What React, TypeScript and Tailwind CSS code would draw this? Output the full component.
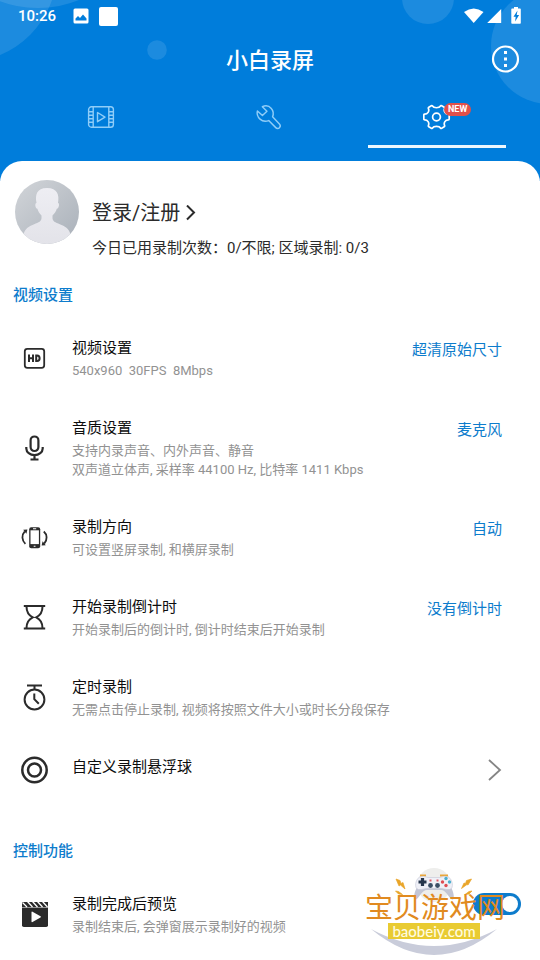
import { useState } from 'react';
import type { ReactNode } from 'react';

interface SettingItem {
  id: string;
  icon: ReactNode;
  title: string;
  lines: string[];
  value?: string;
  arrow?: boolean;
}

const HdIcon = () => (
  <svg width="28" height="28" viewBox="0 0 28 28" fill="none" stroke="#2b2b2b" aria-hidden="true">
    <rect x="4.8" y="3.8" width="19.4" height="19" rx="2.5" strokeWidth="1.8" />
    <path d="M9 9.5v7.6M13 9.5v7.6M9 13.3h4M16.2 10.5v5.6h.9c1.7 0 2.5-1 2.5-2.8s-.8-2.8-2.5-2.8z" strokeWidth="2" />
  </svg>
);

const MicIcon = () => (
  <svg width="28" height="28" viewBox="0 0 28 28" fill="none" stroke="#2b2b2b" strokeWidth="2.2" aria-hidden="true">
    <rect x="10.6" y="2.5" width="7.8" height="14.5" rx="3.9" />
    <path d="M6.3 13v1.5a8.2 6.6 0 0 0 16.4 0V13M14.5 21v4.500M10.5 25.500h8" />
  </svg>
);

const RotateIcon = () => (
  <svg width="28" height="28" viewBox="0 0 28 28" fill="none" stroke="#2b2b2b" aria-hidden="true">
    <rect x="9.2" y="3.2" width="11" height="21" rx="2" fill="#2b2b2b" stroke="none" />
    <rect x="10.5" y="6.3" width="8.4" height="13.8" fill="#fff" stroke="none" />
    <path d="M13 4.8h3.2M13.7 22.2h1.8" stroke="#fff" strokeWidth="1.1" />
    <path d="M5.4 19.8C1.8 16.5 1.3 11 4.8 7.3M23.8 7.5c3.5 3 3.8 8.5.4 12.2" strokeWidth="1.8" />
    <path d="M3.2 5.8l4.2-.3-1 4.3zM25.8 21.2l-4.2.2 1-4.2z" fill="#2b2b2b" stroke="none" />
  </svg>
);

const HourglassIcon = () => (
  <svg width="28" height="28" viewBox="0 0 28 28" fill="none" stroke="#2b2b2b" strokeWidth="2" aria-hidden="true">
    <path d="M3.8 2h21.4M3.8 24.5h21.4" />
    <path d="M6.5 2.5c0 5 1.5 8.500 6.3 10.8C8 15.600 6.5 19 6.5 24M22.5 2.5c0 5-1.5 8.500-6.3 10.8 4.8 2.300 6.3 5.700 6.3 10.700" />
  </svg>
);

const TimerIcon = () => (
  <svg width="28" height="28" viewBox="0 0 28 28" fill="none" stroke="#2b2b2b" strokeWidth="2" aria-hidden="true">
    <circle cx="14.5" cy="15.5" r="9.9" />
    <path d="M7 1.500h15M14.500 1.500v4.500M14.300 9.500v5.600l4.500 4.600" />
  </svg>
);

const BallIcon = () => (
  <svg width="28" height="28" viewBox="0 0 28 28" fill="none" stroke="#2b2b2b" strokeWidth="2.5" aria-hidden="true">
    <circle cx="14.5" cy="14" r="12.2" />
    <circle cx="14.5" cy="14" r="6.5" />
  </svg>
);

const ClapperIcon = () => (
  <svg width="28" height="28" viewBox="0 0 28 28" aria-hidden="true">
    <path d="M2 1h26v5.500H2z" fill="#2b2b2b" />
    <path d="M2.500 1.500l4.500 4.500M7.500 .5l5 5.500M12.500 .5l5 5.500M17.500 .5l5 5.500M22.500 .5l5 5.500" stroke="#fff" strokeWidth="1.3" />
    <path d="M2 7h26V24.200a1.800 1.800 0 0 1-1.800 1.800H3.800A1.800 1.800 0 0 1 2 24.200z" fill="#2b2b2b" />
    <path d="M11.500 11.300v9.200a.7.7 0 0 0 1 .6l8-4.600a.7.7 0 0 0 0-1.200l-8-4.600a.7.7 0 0 0-1 .6z" fill="#fff" />
  </svg>
);

const videoSettings: SettingItem[] = [
  { id: 'video', icon: <HdIcon />, title: '视频设置', lines: ['540x960\u00a0 30FPS\u00a0 8Mbps'], value: '超清原始尺寸' },
  {
    id: 'audio',
    icon: <MicIcon />,
    title: '音质设置',
    lines: ['支持内录声音、内外声音、静音', '双声道立体声, 采样率 44100 Hz, 比特率 1411 Kbps'],
    value: '麦克风',
  },
  { id: 'direction', icon: <RotateIcon />, title: '录制方向', lines: ['可设置竖屏录制, 和横屏录制'], value: '自动' },
  {
    id: 'countdown',
    icon: <HourglassIcon />,
    title: '开始录制倒计时',
    lines: ['开始录制后的倒计时, 倒计时结束后开始录制'],
    value: '没有倒计时',
  },
  {
    id: 'timer',
    icon: <TimerIcon />,
    title: '定时录制',
    lines: ['无需点击停止录制, 视频将按照文件大小或时长分段保存'],
  },
  { id: 'ball', icon: <BallIcon />, title: '自定义录制悬浮球', lines: [], arrow: true },
];

function StatusBar() {
  return (
    <div className="flex h-8 items-center px-[18px]">
      <span className="text-[15px] font-medium leading-5">10:26</span>
      <svg className="ml-[17px]" width="16" height="16" viewBox="0 0 16 16" aria-hidden="true">
        <rect x="0.5" y="0.5" width="15" height="15" rx="1.5" fill="#fff" />
        <path d="M2.500 12.500v-2l2.500-2.500 2 2 3-3.500 3.500 4v2z" fill="#007ddb" />
      </svg>
      <span className="ml-[10px] size-[19px] rounded-[2px] bg-white" />
      <svg className="ml-auto" width="58" height="20" viewBox="0 0 58 20" fill="#fff" aria-hidden="true">
        <path d="M0 6Q9.700-1 19.500 6L9.700 17z" />
        <path d="M37.200 3v14h-14z" />
        <path d="M50 1h4v1.500h2a.8.8 0 0 1 .8.8V17a.8.8 0 0 1-.8.8h-7.900a.8.8 0 0 1-.8-.8V3.300a.8.8 0 0 1 .8-.8H50z" />
        <path d="M53.500 4.500l-4 6.200h2.200l-.6 4.800 4-6.500h-2.400z" fill="#007ddb" />
      </svg>
    </div>
  );
}

function Header({ tab, onTab }: { tab: number; onTab: (tab: number) => void }) {
  const tabs = [
    {
      label: '视频',
      icon: (
        <svg width="28" height="28" viewBox="0 0 28 28" fill="none" stroke="currentColor" strokeWidth="1.4" aria-hidden="true">
          <rect x="1.6" y="3.8" width="24.8" height="20.4" rx="2.8" />
          <path d="M6.200 4v20M21.800 4v20M2 8.800h4M2 12.200h4M2 15.800h4M2 19.200h4M22 8.800h4M22 12.200h4M22 15.800h4M22 19.200h4" />
          <path d="M10.500 9.500v9.200l7.500-4.600z" strokeLinejoin="round" />
        </svg>
      ),
    },
    {
      label: '工具',
      icon: (
        <svg width="28" height="28" viewBox="0 -1 29 29" fill="none" stroke="currentColor" strokeWidth="1.5" strokeLinejoin="round" aria-hidden="true">
          <path d="M2.500 7.300l5.200 4.700 4.700-4.500-4.800-4.700c3.300-1.500 7-.8 9.300 1.800 2.200 2.500 2.400 5.800 1.300 8.700l7.100 7.500c1.100 1.200 1 2.800 0 3.800s-2.700 1-3.800-.1l-7.300-7.300c-3 1.200-6.500.8-9-1.500-2.500-2.400-3.500-5.500-2.700-8.400z" />
        </svg>
      ),
    },
    {
      label: '设置',
      icon: (
        <svg width="28" height="28" viewBox="0 0 28 28" fill="none" stroke="currentColor" strokeWidth="1.7" strokeLinejoin="round" aria-hidden="true">
          <path d="M9.500 3c1.300 2.300 6.700 2.300 8 0 .3-.5.700-.6 1.200-.3l2.500 1.500c.5.3.6.7.4 1.200-1.200 2.800.800 5.800 3.700 5.800.6 0 .9.300.9.800v4c0 .5-.3.800-.9.800-2.900 0-4.900 3-3.700 5.800.2.500.1.900-.4 1.200l-2.500 1.500c-.5.3-.9.200-1.200-.3-1.300-2.300-6.700-2.300-8 0-.3.500-.7.600-1.200.3l-2.500-1.500c-.5-.3-.6-.7-.4-1.200 1.200-2.800-.8-5.800-3.700-5.800-.6 0-.9-.3-.9-.800v-4c0-.5.3-.8.9-.8 2.900 0 4.900-3 3.700-5.800-.2-.5-.1-.9.4-1.200l2.500-1.500c.5-.3.9-.2 1.200.3z" />
          <circle cx="13.5" cy="14" r="3.9" />
        </svg>
      ),
    },
  ];

  return (
    <header className="relative h-[181px] overflow-hidden bg-[#007ddb] text-white">
      {/* background bubbles */}
      <svg className="absolute left-0 top-0" width="200" height="70" viewBox="0 0 200 70" fill="#fff" fillOpacity="0.11" aria-hidden="true">
        <circle cx="-35" cy="-30" r="92" />
        <circle cx="38" cy="-101" r="109" />
        <circle cx="157" cy="50" r="9.8" />
      </svg>
      <svg className="absolute right-0 top-0" width="140" height="106" viewBox="0 0 140 106" fill="#fff" fillOpacity="0.11" aria-hidden="true">
        <circle cx="28" cy="-2" r="26" />
        <circle cx="149" cy="46" r="58" />
      </svg>

      <div className="relative">
        <StatusBar />
        <div className="grid h-[54px] grid-cols-[1fr_auto_1fr] items-center px-5">
          <h1 className="col-start-2 pt-[3px] text-[22px] font-medium leading-8">小白录屏</h1>
          <button type="button" aria-label="更多" className="justify-self-end">
            <svg width="29" height="29" viewBox="0 0 29 29" fill="#fff" aria-hidden="true">
              <circle cx="14.5" cy="14" r="12.5" fill="none" stroke="#fff" strokeWidth="2.2" />
              <path d="M13 6h3v3h-3zM13 12.500h3v3h-3zM13 19h3v3h-3z" />
            </svg>
          </button>
        </div>
        <nav className="grid grid-cols-3 pl-[17px] pr-[19px]">
          {tabs.map((item, index) => (
            <button
              key={item.label}
              type="button"
              aria-label={item.label}
              onClick={() => onTab(index)}
              className={`flex h-[62px] flex-col items-center pt-[17px] ${index === tab ? 'text-white' : 'text-[#8fcdf8]'}`}
            >
              <span className="relative">
                {item.icon}
                {index === 2 && (
                  <span className="absolute left-[21px] top-0 rounded-full bg-[#e2504a] px-1 text-[9px] font-bold leading-[13px] text-white">
                    NEW
                  </span>
                )}
              </span>
              <span className={`mt-auto h-[3px] w-[138px] ${index === tab ? 'bg-[#eef7fe]' : ''}`} />
            </button>
          ))}
        </nav>
      </div>
    </header>
  );
}

function Profile() {
  return (
    <div className="flex items-start gap-[13px] px-[15px] pt-[19px]">
      <svg className="shrink-0" width="64" height="64" viewBox="0 0 64 64" aria-hidden="true">
        <defs>
          <linearGradient id="avatarBg" x1="0" y1="0" x2="1" y2="1">
            <stop offset="0" stopColor="#d2d5d9" />
            <stop offset="1" stopColor="#a9b0b9" />
          </linearGradient>
          <linearGradient id="avatarBody" x1="0" y1="0" x2="0" y2="1">
            <stop offset="0" stopColor="#eeeef3" />
            <stop offset="1" stopColor="#e3e3e9" />
          </linearGradient>
          <clipPath id="avatarClip">
            <circle cx="32" cy="32" r="32" />
          </clipPath>
        </defs>
        <g clipPath="url(#avatarClip)">
          <path d="M0 0h64v64H0z" fill="url(#avatarBg)" />
          <path
            d="M21.500 23c-1.500-8 0-15 10.500-15s12.500 7 11 15c1.700-.2 1.200 5.500-1.200 5.800-.8 3-2.400 5-4.300 6.600v3c.5 3.800 4.500 4.300 9 6.500 5 2.300 8.500 4.500 9.500 12V64H8V56.900c1-7.500 4.500-9.700 9.500-12 4.500-2.200 8.500-2.700 9-6.500v-3c-1.900-1.600-3.300-3.600-4.100-6.600-2.400-.3-2.700-6-.9-5.800z"
            fill="url(#avatarBody)"
          />
        </g>
      </svg>
      <div className="pt-[21px] text-[#2b2b2b]">
        <a href="#login" className="flex h-6 items-center gap-[6px] text-xl leading-6">
          登录/注册
          <svg width="10" height="16" viewBox="0 0 10 16" fill="none" stroke="#2b2b2b" strokeWidth="2" aria-hidden="true">
            <path d="M1 .5l7 7-7 7" />
          </svg>
        </a>
        <p className="mt-3 text-[15px] leading-[22px]">今日已用录制次数：0/不限; 区域录制: 0/3</p>
      </div>
    </div>
  );
}

function RowText({ title, lines }: { title: string; lines: string[] }) {
  return (
    <span className="block flex-1 text-left">
      <span className="block text-[15px] leading-[22px] text-[#0d0d0d]">{title}</span>
      {lines.length > 0 && (
        <span className="mt-[2px] block text-[13px] leading-[19px] text-[#929292]">
          {lines.map((line) => (
            <span key={line} className="block">
              {line}
            </span>
          ))}
        </span>
      )}
    </span>
  );
}

function Row({ item }: { item: SettingItem }) {
  return (
    <button type="button" className="flex w-full items-start pb-[18px] pl-5 pr-[38px] pt-[19px]">
      <span className="mr-6 shrink-0 self-center">{item.icon}</span>
      <RowText title={item.title} lines={item.lines} />
      {item.value && <span className="pt-[2px] text-[15px] leading-[22px] text-[#0d7ccc]">{item.value}</span>}
      {item.arrow && (
        <svg className="shrink-0 self-center" width="14" height="22" viewBox="0 0 14 22" fill="none" stroke="#858585" strokeWidth="1.8" aria-hidden="true">
          <path d="M1 1l11 10L1 21" />
        </svg>
      )}
    </button>
  );
}

// Site mark floating over the bottom right corner
function SiteMark() {
  return (
    <div className="pointer-events-none absolute bottom-0 right-[34px] flex w-[142px] flex-col items-center">
      <svg className="absolute left-0 top-0" width="142" height="92" viewBox="0 0 142 92" aria-hidden="true">
        <circle cx="70" cy="17" r="17" fill="#eeeeec" />
        <path d="M56 7.500h6M76 7.500h8" stroke="#e9a63a" strokeWidth="2" />
        <path d="M54 17c-3 6-4.500 10-3.500 14 2 2 4-2 6-4.500s4-4.500 6.500-4.500h14c2.500 0 4.500 2 6.500 4.500s4 6.500 6 4.500c1-4-.5-8-3.500-14z" fill="#c3c6d5" />
        <path
          d="M58 8.500c2-.5 4 .5 6 1h12c2-.5 4-1.500 6-1 4 .5 5.500 3 6.300 7 .4 3-.3 5.500-2.800 6-4 .5-5.500-1-8.500-1h-14c-3 0-4.500 1.500-8.500 1-2.500-.5-3.200-3-2.800-6 .8-4 2.300-6.500 6.300-7z"
          fill="#eff0f7"
          stroke="#c3c6d5"
          strokeWidth="0.6"
        />
        <path d="M58.500 10v8M54.500 14h8" stroke="#26364c" strokeWidth="3.2" />
        <g fill="#4bafd0">
          <circle cx="82" cy="10.500" r="1.7" />
          <circle cx="82" cy="17.500" r="1.7" fill="#df4c54" />
          <circle cx="78.500" cy="14" r="1.7" fill="#df4c54" />
          <circle cx="85.500" cy="14" r="1.7" />
        </g>
        <circle cx="66.500" cy="17.500" r="2.4" fill="#3b4e66" />
        <circle cx="73.500" cy="17.500" r="2.4" fill="#3b4e66" />
        <path d="M65.500 12.500h2M72.500 12.500h2" stroke="#e25865" strokeWidth="1.8" />
        <path d="M32 11l4 1.500 1 3 2-1 2 6.500-4.500-4-1.500 1zM107.500 11l-5 1.500-1 3-1.500-.5-2.500 5.500 5.500-4 1 .5zM31.500 23l3 .5 4 3-4-.5zM108 23l-3 .5-4 3 4-.5z" fill="#e9a528" stroke="#e9a528" strokeWidth="0.7" />
        <path d="M7 61Q70 113 133 61Q70 95 7 61z" fill="#c9ccda" />
      </svg>
      <span className="relative pt-[26px] text-[28px] leading-[29px] text-[#e18a20]">宝贝游戏网</span>
      <span className="relative mr-[2px] bg-[#e9cb32] px-1 font-[Lato,sans-serif] text-[15px] font-medium leading-4 text-[#fffce0]">
        baobeiy.com
      </span>
      <span className="h-[21px]" />
    </div>
  );
}

export default function App() {
  const [tab, setTab] = useState(2);
  const [preview, setPreview] = useState(true);

  return (
    <div className="relative min-h-screen bg-white font-[Roboto,'Noto_Sans_CJK_SC',sans-serif]">
      <Header tab={tab} onTab={setTab} />
      <main className="relative -mt-5 rounded-t-[22px] bg-white pb-1">
        <Profile />
        <section className="pt-[25px]">
          <h2 className="mb-3 px-[13px] text-[15px] font-medium leading-[22px] text-[#0d7ccc]">视频设置</h2>
          {videoSettings.map((item) => (
            <Row key={item.id} item={item} />
          ))}
        </section>
        <section className="pt-[38px]">
          <h2 className="mb-3 px-[13px] text-[15px] font-medium leading-[22px] text-[#0d7ccc]">控制功能</h2>
          <label className="flex items-start pb-[18px] pl-5 pr-[19px] pt-[19px]">
            <span className="mr-6 shrink-0 self-center">
              <ClapperIcon />
            </span>
            <RowText title="录制完成后预览" lines={['录制结束后, 会弹窗展示录制好的视频']} />
            <input
              type="checkbox"
              role="switch"
              checked={preview}
              onChange={(e) => setPreview(e.target.checked)}
              className="h-[22px] w-12 shrink-0 appearance-none rounded-full bg-[#b9bdc4] before:m-[3px] before:block before:size-4 before:rounded-full before:bg-white checked:bg-[#0d7ccc] checked:before:ml-[29px]"
            />
          </label>
        </section>
      </main>
      <SiteMark />
    </div>
  );
}
